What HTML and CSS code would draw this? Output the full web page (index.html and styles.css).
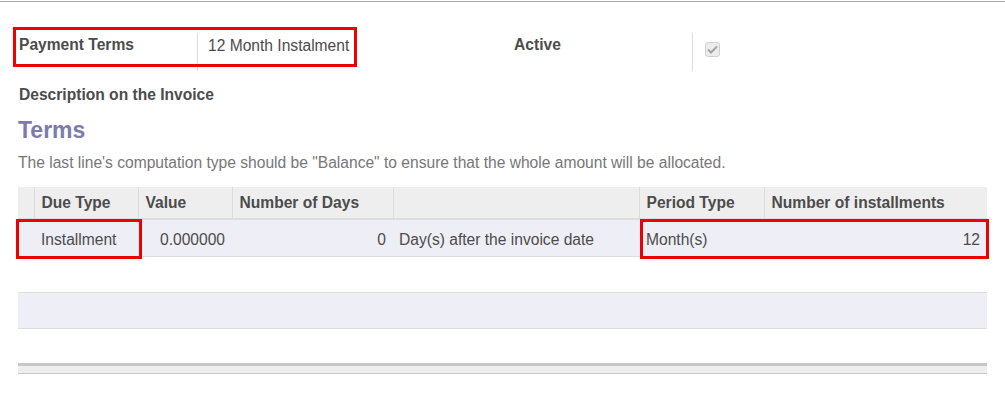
FILE: index.html
```html
<!DOCTYPE html>
<html>
<head>
<meta charset="utf-8">
<link rel="stylesheet" href="styles.css">
</head>
<body>
<div class="page">
  <div class="topline"></div>
  <div class="sheet">
    <div class="groups">
      <div class="group group-left">
        <div class="label">Payment Terms</div>
        <div class="value">12 Month Instalment</div>
      </div>
      <div class="group group-right">
        <div class="label">Active</div>
        <div class="value">
          <span class="checkbox">
            <svg width="11" height="9" viewBox="0 0 11 9"><path d="M1 4.5 L4 7.5 L10 1.5" fill="none" stroke="#a3a3a3" stroke-width="2"/></svg>
          </span>
        </div>
      </div>
    </div>
    <div class="desc-label">Description on the Invoice</div>
    <h2 class="section-title">Terms</h2>
    <p class="help">The last line's computation type should be "Balance" to ensure that the whole amount will be allocated.</p>
    <table class="lines">
      <colgroup>
        <col class="c-handle"><col class="c-type"><col class="c-value"><col class="c-days"><col class="c-option"><col class="c-period"><col class="c-count">
      </colgroup>
      <thead>
        <tr>
          <th class="first"></th>
          <th>Due Type</th>
          <th>Value</th>
          <th>Number of Days</th>
          <th></th>
          <th>Period Type</th>
          <th>Number of installments</th>
        </tr>
      </thead>
      <tbody>
        <tr class="striped data">
          <td></td>
          <td>Installment</td>
          <td class="num">0.000000</td>
          <td class="num">0</td>
          <td class="opt">Day(s) after the invoice date</td>
          <td>Month(s)</td>
          <td class="num">12</td>
        </tr>
        <tr class="empty r2"><td colspan="7"></td></tr>
        <tr class="empty striped r3"><td colspan="7"></td></tr>
        <tr class="empty r4"><td colspan="7"></td></tr>
      </tbody>
      <tfoot>
        <tr><td colspan="7"></td></tr>
      </tfoot>
    </table>
  </div>
  <span class="mark mark-terms"></span>
  <span class="mark mark-type"></span>
  <span class="mark mark-period"></span>
</div>
</body>
</html>
```
FILE: styles.css
```css
html, body {
  margin: 0;
  padding: 0;
  background: #fff;
}
body {
  font-family: "Liberation Sans", Arial, sans-serif;
  font-size: 15.6px;
  line-height: 18px;
  color: #4c4c4c;
}
.page {
  position: relative;
  width: 1005px;
  height: 394px;
  overflow: hidden;
}
.topline {
  margin-top: 1px;
  height: 1px;
  background: #a9a9a9;
}
.sheet {
  padding: 31px 18px 0 18px;
}
.groups {
  display: flex;
}
.group {
  display: flex;
  height: 38px;
}
.group-left {
  width: 495px;
}
.group-right {
  flex: 1;
}
.label {
  width: 179px;
  padding-top: 3px;
  font-weight: bold;
  box-sizing: border-box;
  padding-left: 1px;
}
.value {
  flex: 1;
  border-left: 1px solid #dddddd;
  padding-left: 10px;
  padding-top: 4px;
}
.checkbox {
  display: flex;
  align-items: center;
  justify-content: center;
  width: 15px;
  height: 15px;
  margin-top: 5px;
  margin-left: 2px;
  box-sizing: border-box;
  border: 1px solid #cfcfcf;
  border-radius: 3px;
  background: #ececec;
}
.desc-label {
  margin-top: 15px;
  padding-left: 1px;
  font-weight: bold;
}
.section-title {
  margin: 13px 0 0 0;
  font-size: 23px;
  line-height: 26px;
  font-weight: bold;
  color: #7c7bad;
}
.help {
  margin: 11px 0 0 0;
  color: #777777;
}
.lines {
  margin-top: 15px;
  width: 969px;
  table-layout: fixed;
  border-collapse: collapse;
  border-spacing: 0;
}
.c-handle { width: 16px; }
.c-type { width: 104px; }
.c-value { width: 94px; }
.c-days { width: 161px; }
.c-option { width: 246px; }
.c-period { width: 125px; }
.c-count { width: 223px; }
.lines th {
  background: #eeeeee;
  text-align: left;
  font-weight: bold;
  height: 32px;
  padding: 0 7px;
  border-left: 1px solid #dcdcdc;
  border-bottom: 2px solid #dddddd;
  white-space: nowrap;
  box-sizing: border-box;
}
.lines th.first {
  border-left: none;
}
.lines td {
  padding: 0 7px;
  height: 37px;
  white-space: nowrap;
  box-sizing: border-box;
  border-bottom: 1px solid #dddddd;
}
.lines td.num {
  text-align: right;
}
.lines td.opt {
  padding-left: 6px;
}
.lines tr.data td {
  padding-top: 4px;
}
.lines tr.striped td {
  background: #eeeef6;
}
.lines tr.r2 td {
  height: 36px;
}
.lines tr.r3 td {
  height: 36px;
}
.lines tr.r4 td {
  height: 36px;
  border-bottom: none;
}
.lines tfoot td {
  height: 9px;
  padding: 0;
  background: #eeeeee;
  border-top: 3px solid #c8c8c8;
  border-bottom: 1px solid #c8c8c8;
}
.mark {
  position: absolute;
  border: 3px solid #ee0000;
  box-sizing: border-box;
}
.mark-terms {
  left: 13px;
  top: 27px;
  width: 344px;
  height: 40px;
}
.mark-type {
  left: 16px;
  top: 219px;
  width: 126px;
  height: 40px;
}
.mark-period {
  left: 640px;
  top: 219px;
  width: 349px;
  height: 40px;
}
```
